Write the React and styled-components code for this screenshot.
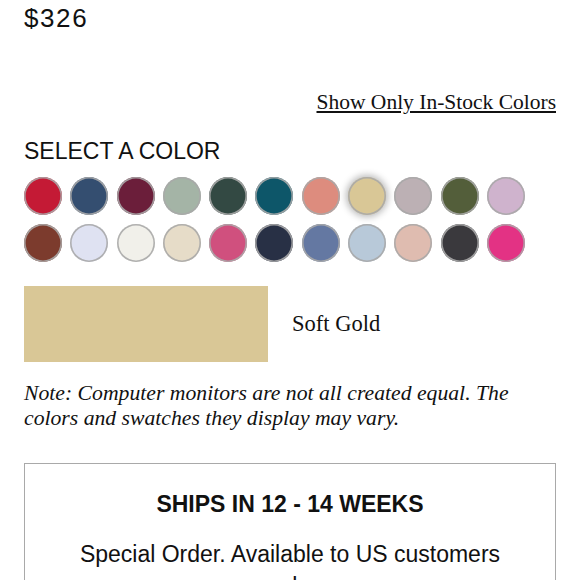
import React from "react";
import styled, { createGlobalStyle } from "styled-components";

const GlobalStyle = createGlobalStyle`
  html, body {
    margin: 0;
    padding: 0;
    background: #ffffff;
  }
  body {
    font-family: "Liberation Sans", Arial, sans-serif;
    color: #111111;
  }
`;

const Page = styled.div`
  width: 532px;
  padding: 3px 24px 0;
  display: flex;
  flex-direction: column;
`;

const Price = styled.div`
  font-family: "Liberation Sans", Arial, sans-serif;
  font-size: 26px;
  line-height: 30px;
  letter-spacing: 1.6px;
  color: #111;
`;

const StockRow = styled.div`
  display: flex;
  justify-content: flex-end;
  margin-top: 57px;
`;

const StockLink = styled.a`
  font-family: "Liberation Serif", "Times New Roman", serif;
  font-size: 21.5px;
  line-height: 24px;
  color: #111;
  text-decoration: underline;
  text-underline-offset: 2px;
  cursor: pointer;
`;

const Heading = styled.h2`
  margin: 24px 0 0;
  font-family: "Liberation Sans", Arial, sans-serif;
  font-weight: 400;
  font-size: 23px;
  line-height: 26px;
  color: #111;
`;

const SwatchGrid = styled.div`
  margin-top: 13px;
  display: grid;
  grid-template-columns: repeat(11, 38px);
  column-gap: 8.3px;
  row-gap: 8.7px;
`;

const Swatch = styled.button`
  width: 38px;
  height: 38px;
  padding: 0;
  border: none;
  border-radius: 50%;
  background: ${(p) => p.$color};
  box-shadow: inset 0 0 0 1.6px rgba(168, 168, 168, 0.9)
    ${(p) => (p.$selected ? ", 0 0 7px 2px rgba(0, 0, 0, 0.28)" : "")};
  cursor: pointer;
`;

const SelectedRow = styled.div`
  margin-top: 24px;
  display: flex;
  align-items: center;
  gap: 24px;
`;

const SelectedChip = styled.div`
  width: 244px;
  height: 76px;
  background: ${(p) => p.$color};
`;

const SelectedName = styled.span`
  font-family: "Liberation Serif", "Times New Roman", serif;
  font-size: 22.5px;
  color: #111;
`;

const Note = styled.p`
  margin: 19px 0 0;
  font-family: "Liberation Serif", "Times New Roman", serif;
  font-style: italic;
  font-size: 21.7px;
  line-height: 25px;
  color: #111;
`;

const ShipBox = styled.div`
  margin-top: 32px;
  border: 1px solid #a9a9a9;
  padding: 27px 32px 20px;
  display: flex;
  flex-direction: column;
  align-items: center;
  text-align: center;
`;

const ShipTitle = styled.div`
  font-family: "Liberation Sans", Arial, sans-serif;
  font-weight: 700;
  font-size: 23px;
  line-height: 26px;
  color: #111;
`;

const ShipText = styled.div`
  margin-top: 21px;
  font-family: "Liberation Sans", Arial, sans-serif;
  font-size: 23px;
  line-height: 32px;
  color: #111;
`;

const colors = [
  { name: "Red", hex: "#c41a35" },
  { name: "Navy", hex: "#344e70" },
  { name: "Burgundy", hex: "#6b1e3a" },
  { name: "Sage", hex: "#a4b4a6" },
  { name: "Forest", hex: "#334943" },
  { name: "Teal", hex: "#0d5669" },
  { name: "Salmon", hex: "#dd8c7e" },
  { name: "Soft Gold", hex: "#d9c796" },
  { name: "Mauve", hex: "#bcb0b4" },
  { name: "Olive", hex: "#535e3a" },
  { name: "Lilac", hex: "#cfb3cd" },
  { name: "Brown", hex: "#7c3b2d" },
  { name: "Periwinkle", hex: "#dfe2f2" },
  { name: "Ivory", hex: "#f1f0ea" },
  { name: "Cream", hex: "#e6dcc8" },
  { name: "Rose", hex: "#d0507e" },
  { name: "Midnight", hex: "#283045" },
  { name: "Slate Blue", hex: "#6478a2" },
  { name: "Light Blue", hex: "#b8c9d9" },
  { name: "Blush", hex: "#dfbcb0" },
  { name: "Charcoal", hex: "#3a393d" },
  { name: "Fuchsia", hex: "#e33284" },
];

export default function App() {
  const [selected, setSelected] = React.useState("Soft Gold");
  const current = colors.find((c) => c.name === selected);
  return (
    <>
      <GlobalStyle />
      <Page>
        <Price>$326</Price>
        <StockRow>
          <StockLink>Show Only In-Stock Colors</StockLink>
        </StockRow>
        <Heading>SELECT A COLOR</Heading>
        <SwatchGrid>
          {colors.map((c) => (
            <Swatch
              key={c.name}
              title={c.name}
              aria-label={c.name}
              $color={c.hex}
              $selected={c.name === selected}
              onClick={() => setSelected(c.name)}
            />
          ))}
        </SwatchGrid>
        <SelectedRow>
          <SelectedChip $color={current.hex} />
          <SelectedName>{current.name}</SelectedName>
        </SelectedRow>
        <Note>
          Note: Computer monitors are not all created equal. The colors and
          swatches they display may vary.
        </Note>
        <ShipBox>
          <ShipTitle>SHIPS IN 12 - 14 WEEKS</ShipTitle>
          <ShipText>Special Order. Available to US customers only.</ShipText>
        </ShipBox>
      </Page>
    </>
  );
}
